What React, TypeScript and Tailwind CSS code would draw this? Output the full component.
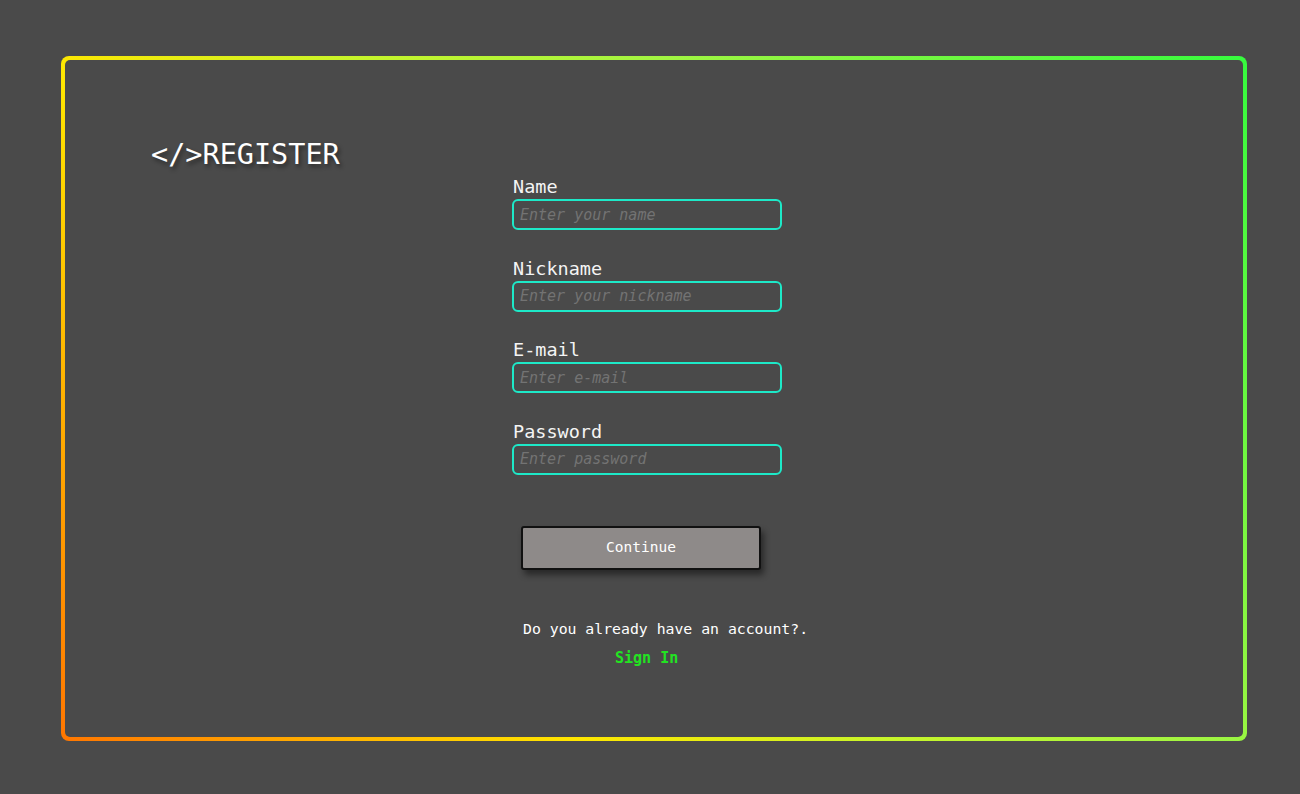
const fields = [
  { label: "Name", placeholder: "Enter your name", type: "text" },
  { label: "Nickname", placeholder: "Enter your nickname", type: "text" },
  { label: "E-mail", placeholder: "Enter e-mail", type: "email" },
  { label: "Password", placeholder: "Enter password", type: "password" },
];

const App = () => {
  return (
    <div className="w-full h-[794px] bg-[#4a4a4a] pt-[56px] pl-[61px] font-['DejaVu_Sans_Mono',monospace]">
      <div className="w-[1186px] h-[685px] rounded-[8px] p-[4px] bg-[linear-gradient(52deg,#ff7600_0%,#ffe600_30%,#c8f52a_48%,#a2f542_66%,#36fb3e_100%)]">
        <div className="w-full h-full rounded-[5px] bg-[#4a4a4a] pl-[86px] pt-[80px]">
          <h1 className="text-[28.5px] leading-[29px] text-white [text-shadow:2px_3px_4px_rgba(0,0,0,0.45)]">
            &lt;/&gt;REGISTER
          </h1>

          <form
            className="ml-[361px] mt-[8px] w-[270px] flex flex-col"
            onSubmit={(e) => e.preventDefault()}
          >
            <div className="flex flex-col gap-[28.5px]">
              {fields.map((f) => (
                <div key={f.label} className="flex flex-col">
                  <label className="pl-[1px] text-[18.5px] leading-[20px] text-[#f4f4f4]">{f.label}</label>
                  <input
                    type={f.type}
                    placeholder={f.placeholder}
                    className="mt-[2px] h-[31px] w-[270px] rounded-[6px] border-2 border-[#1de9c8] bg-transparent px-[6px] text-[15px] text-white italic outline-none placeholder:text-[#737373] placeholder:italic"
                  />
                </div>
              ))}
            </div>

            <button
              type="submit"
              className="ml-[9px] mt-[51px] w-[240px] h-[44px] rounded-[3px] border-2 border-[#111111] bg-[#8e8a89] text-[14.5px] text-white shadow-[3px_5px_6px_rgba(0,0,0,0.45)]"
            >
              Continue
            </button>

            <p className="ml-[11px] mt-[49px] w-[330px] text-[14.8px] leading-[20px] text-white">
              Do you already have an account?.
            </p>
            <a href="#" className="ml-[103px] mt-[9px] text-[15px] leading-[20px] font-bold text-[#22e322]">
              Sign In
            </a>
          </form>
        </div>
      </div>
    </div>
  );
};

export default App;
